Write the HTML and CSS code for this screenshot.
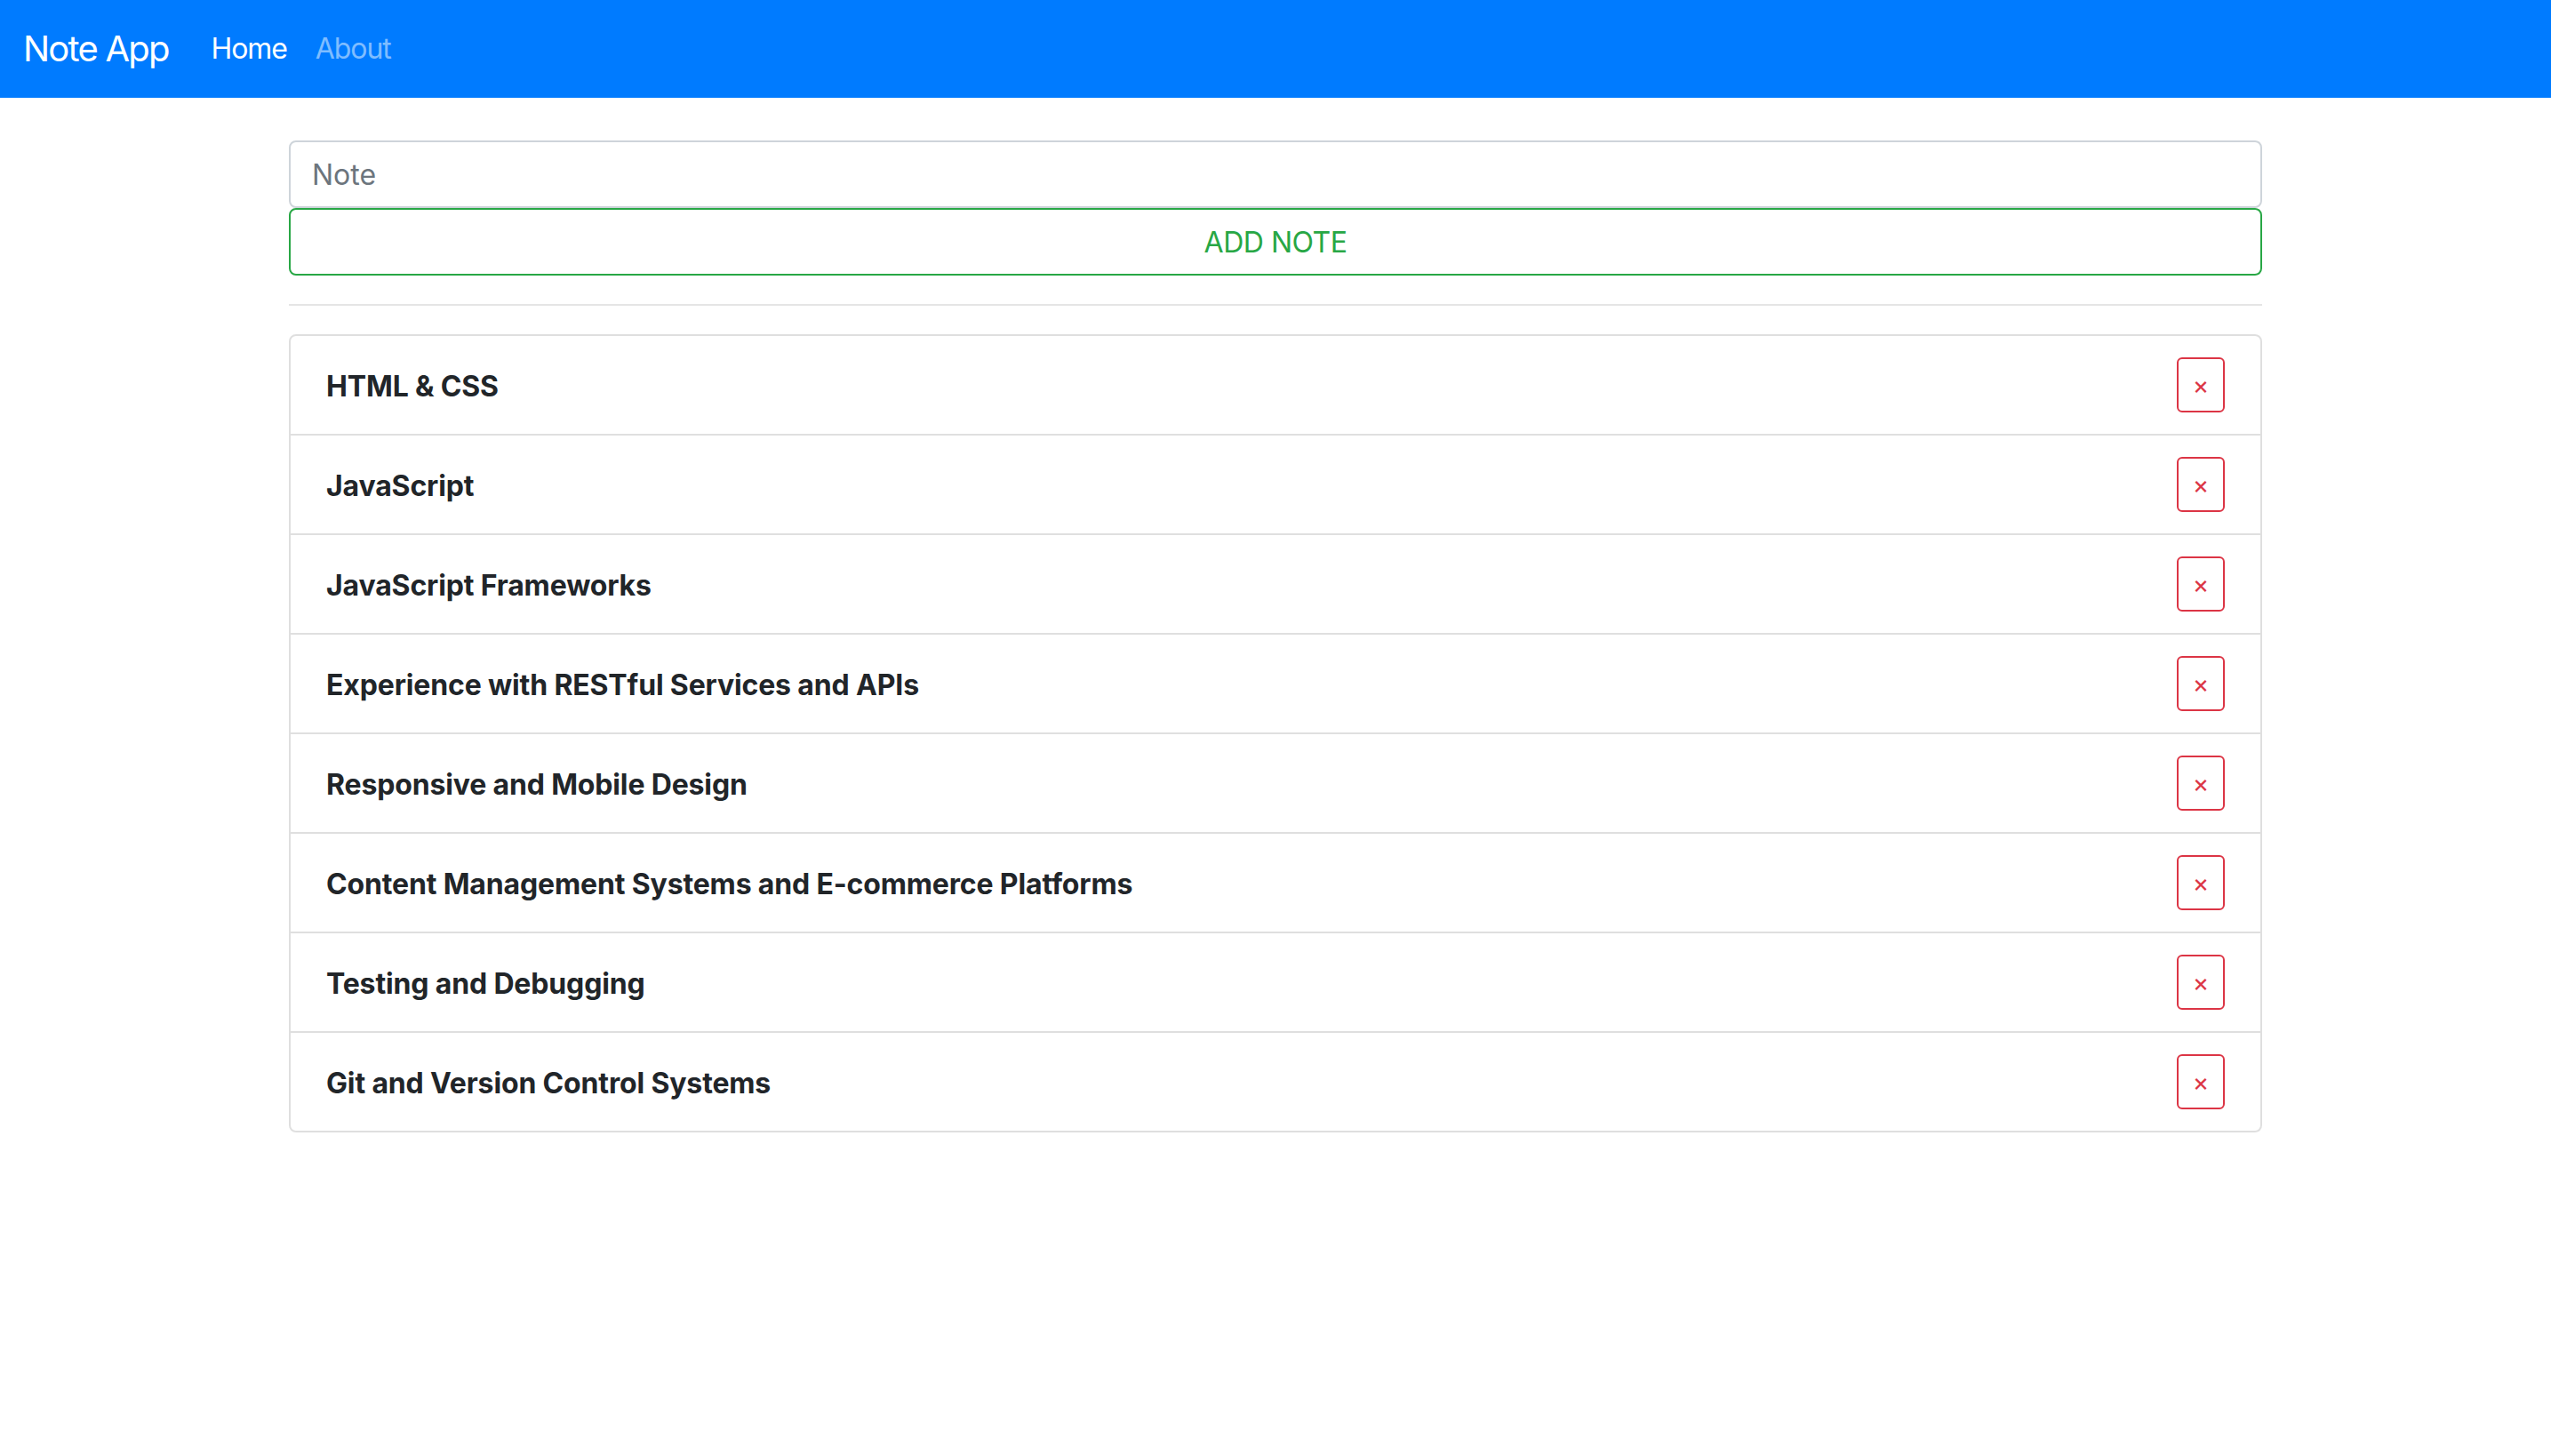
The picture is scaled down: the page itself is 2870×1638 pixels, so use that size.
FILE: index.html
```html
<!DOCTYPE html>
<html lang="en">
<head>
<meta charset="utf-8">
<title>Note App</title>
<link rel="stylesheet" href="styles.css">
</head>
<body>
<nav class="navbar">
  <a class="brand" href="#">Note App</a>
  <ul class="nav">
    <li><a class="nav-link active" href="#">Home</a></li>
    <li><a class="nav-link" href="#">About</a></li>
  </ul>
</nav>
<main class="container">
  <form class="note-form">
    <input class="note-input" type="text" placeholder="Note">
    <button class="add-btn" type="button">ADD NOTE</button>
  </form>
  <hr class="divider">
  <ul class="list">
    <li class="item"><span class="item-text">HTML &amp; CSS</span><button class="del-btn" type="button">&times;</button></li>
    <li class="item"><span class="item-text">JavaScript</span><button class="del-btn" type="button">&times;</button></li>
    <li class="item"><span class="item-text">JavaScript Frameworks</span><button class="del-btn" type="button">&times;</button></li>
    <li class="item"><span class="item-text">Experience with RESTful Services and APIs</span><button class="del-btn" type="button">&times;</button></li>
    <li class="item"><span class="item-text">Responsive and Mobile Design</span><button class="del-btn" type="button">&times;</button></li>
    <li class="item"><span class="item-text">Content Management Systems and E-commerce Platforms</span><button class="del-btn" type="button">&times;</button></li>
    <li class="item"><span class="item-text">Testing and Debugging</span><button class="del-btn" type="button">&times;</button></li>
    <li class="item"><span class="item-text">Git and Version Control Systems</span><button class="del-btn" type="button">&times;</button></li>
  </ul>
</main>
</body>
</html>
```

FILE: styles.css
```css
* { box-sizing: border-box; }
html, body {
  margin: 0;
  padding: 0;
  background: #fff;
  font-family: "Inter", "Liberation Sans", sans-serif;
  color: #212529;
}
.navbar {
  display: flex;
  align-items: center;
  height: 110px;
  padding: 0 26px;
  background: #007bff;
}
.brand {
  font-size: 40px;
  line-height: 60px;
  letter-spacing: -1.8px;
  color: #fff;
  text-decoration: none;
  margin-right: 32px;
}
.nav {
  display: flex;
  list-style: none;
  margin: 0;
  padding: 0;
}
.nav-link {
  display: block;
  padding: 0 16px;
  font-size: 32px;
  line-height: 48px;
  letter-spacing: -1.1px;
  color: rgba(255,255,255,.5);
  text-decoration: none;
}
.nav-link.active { color: #fff; }
.container {
  width: 2280px;
  margin: 0 auto;
  padding: 48px 30px 0;
}
.note-form {
  display: flex;
  flex-direction: column;
  margin: 0;
}
.note-input {
  display: block;
  width: 100%;
  height: 76px;
  padding: 0 24px;
  font-family: inherit;
  font-size: 32px;
  color: #495057;
  border: 2px solid #ced4da;
  border-radius: 8px;
  outline: none;
}
.note-input::placeholder { color: #6c757d; }
.add-btn {
  display: block;
  width: 100%;
  height: 76px;
  font-family: inherit;
  font-size: 32px;
  letter-spacing: -0.5px;
  color: #28a745;
  background: transparent;
  border: 2px solid #28a745;
  border-radius: 8px;
}
.divider {
  margin: 32px 0;
  border: 0;
  border-top: 2px solid rgba(0,0,0,.1);
}
.list {
  list-style: none;
  margin: 0;
  padding: 0;
  border: 2px solid rgba(0,0,0,.125);
  border-radius: 8px;
}
.item {
  display: flex;
  align-items: center;
  justify-content: space-between;
  height: 112px;
  padding: 0 40px;
  border-top: 2px solid rgba(0,0,0,.125);
}
.item:first-child { border-top: 0; height: 110px; }
.item-text {
  padding-top: 4px;
  font-size: 32px;
  font-weight: 700;
  line-height: 48px;
  letter-spacing: -0.15px;
}
.del-btn {
  width: 54px;
  height: 62px;
  padding: 0;
  font-family: inherit;
  font-size: 28px;
  line-height: 42px;
  color: #dc3545;
  background: transparent;
  border: 2px solid #dc3545;
  border-radius: 6px;
}
```
